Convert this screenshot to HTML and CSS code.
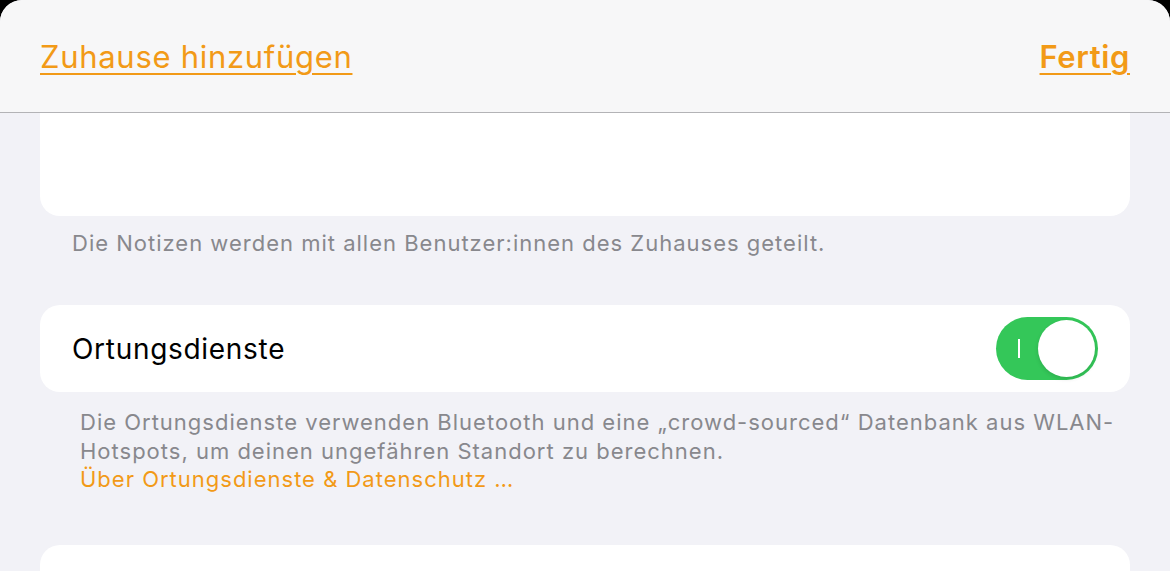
FILE: index.html
```html
<!DOCTYPE html>
<html lang="de">
<head>
    <meta charset="UTF-8">
    <meta name="viewport" content="width=device-width, initial-scale=1.0">
    <title>Zuhause</title>
    <link rel="stylesheet" href="styles.css">
</head>
<body>
    <div class="sheet">
        <header class="navbar">
            <a class="nav_btn" href="#">Zuhause hinzufügen</a>
            <a class="nav_btn done" href="#">Fertig</a>
        </header>
        <main class="content">
            <section class="group">
                <div class="card notes"></div>
                <p class="footnote">Die Notizen werden mit allen Benutzer:innen des Zuhauses geteilt.</p>
            </section>
            <section class="group">
                <div class="card row">
                    <span class="label">Ortungsdienste</span>
                    <span class="switch on"><span class="switch_mark"></span><span class="knob"></span></span>
                </div>
                <p class="footnote location">Die Ortungsdienste verwenden Bluetooth und eine „crowd-sourced“ Datenbank aus WLAN-Hotspots, um deinen ungefähren Standort zu berechnen.<br><a href="#">Über Ortungsdienste &amp; Datenschutz …</a></p>
            </section>
            <section class="group">
                <div class="card empty"></div>
            </section>
        </main>
    </div>
</body>
</html>
```

FILE: styles.css
```css
* {
  margin: 0;
  padding: 0;
  box-sizing: border-box;
}

body {
  width: 100%;
  height: 100vh;
  overflow: hidden;
  background-color: #000;
  font-family: Inter, "Liberation Sans", sans-serif;
}

a {
  color: #f29a17;
}

.sheet {
  height: 100vh;
  background-color: #f2f2f7;
  border-radius: 22px 22px 0 0;
  overflow: hidden;
}

.navbar {
  height: 113px;
  display: flex;
  justify-content: space-between;
  align-items: center;
  padding: 0 40px 0 40px;
  background-color: #f7f7f8;
  border-bottom: 1px solid #b3b3b6;
}

.nav_btn {
  font-size: 31px;
  letter-spacing: 0.7px;
  text-decoration: underline;
  text-decoration-thickness: 2px;
  text-underline-offset: 5px;
}

.nav_btn.done {
  font-weight: 600;
  letter-spacing: 0.6px;
}

.content {
  padding: 0 40px;
}

.card {
  background-color: #fff;
  border-radius: 20px;
}

.card.notes {
  height: 103px;
  border-radius: 0 0 20px 20px;
}

.card.row {
  height: 87px;
  margin-top: 47px;
  display: flex;
  justify-content: space-between;
  align-items: center;
  padding: 0 32px;
}

.label {
  font-size: 28px;
  letter-spacing: 0.7px;
  color: #000;
}

.switch {
  width: 102px;
  height: 63px;
  border-radius: 32px;
  background-color: #34c759;
  display: flex;
  align-items: center;
  padding: 0 3px 0 22px;
  justify-content: space-between;
}

.switch_mark {
  width: 2px;
  height: 19px;
  background-color: #fff;
}

.knob {
  width: 57px;
  height: 57px;
  border-radius: 50%;
  background-color: #fff;
  box-shadow: 0 2px 4px rgba(0, 0, 0, 0.12);
}

.footnote {
  margin-top: 13px;
  padding: 0 20px 0 32px;
  font-size: 22px;
  letter-spacing: 1px;
  line-height: 29px;
  color: #88888d;
}

.footnote.location {
  margin-top: 16px;
  padding: 0 5px 0 40px;
  line-height: 28.5px;
}

.footnote a {
  text-decoration: none;
}

.card.empty {
  height: 80px;
  margin-top: 51px;
}
```
